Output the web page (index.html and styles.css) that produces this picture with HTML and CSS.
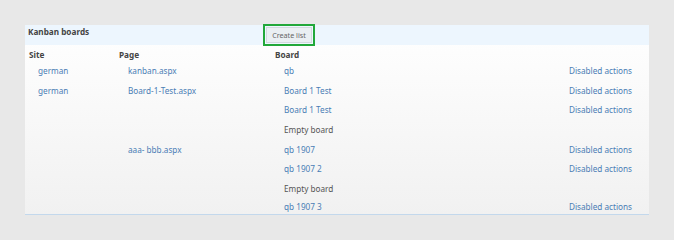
FILE: index.html
```
<!DOCTYPE html>
<html lang="en">
<head>
    <meta charset="UTF-8">
    <title>Kanban boards</title>
    <link rel="stylesheet" href="styles.css">
</head>
<body>
    <div class="panel">
        <div class="panel-head">
            <div class="title">Kanban boards</div>
            <div class="focus-ring"><button class="btn">Create list</button></div>
        </div>
        <div class="row cols">
            <div class="site">Site</div>
            <div class="page">Page</div>
            <div class="board">Board</div>
            <div></div>
        </div>
        <div class="rows">
            <div class="row">
                <div class="site link">german</div>
                <div class="page link">kanban.aspx</div>
                <div class="board link">qb</div>
                <div class="act link">Disabled actions</div>
            </div>
            <div class="row">
                <div class="site link">german</div>
                <div class="page link">Board-1-Test.aspx</div>
                <div class="board link">Board 1 Test</div>
                <div class="act link">Disabled actions</div>
            </div>
            <div class="row">
                <div class="site"></div>
                <div class="page"></div>
                <div class="board link">Board 1 Test</div>
                <div class="act link">Disabled actions</div>
            </div>
            <div class="row">
                <div class="site"></div>
                <div class="page"></div>
                <div class="board">Empty board</div>
                <div class="act"></div>
            </div>
            <div class="row">
                <div class="site"></div>
                <div class="page link">aaa- bbb.aspx</div>
                <div class="board link">qb 1907</div>
                <div class="act link">Disabled actions</div>
            </div>
            <div class="row">
                <div class="site"></div>
                <div class="page"></div>
                <div class="board link">qb 1907 2</div>
                <div class="act link">Disabled actions</div>
            </div>
            <div class="row">
                <div class="site"></div>
                <div class="page"></div>
                <div class="board">Empty board</div>
                <div class="act"></div>
            </div>
            <div class="row last">
                <div class="site"></div>
                <div class="page"></div>
                <div class="board link">qb 1907 3</div>
                <div class="act link">Disabled actions</div>
            </div>
        </div>
    </div>
</body>
</html>
```

FILE: styles.css
```
body {
    margin: 0;
    background-color: #e8e8e8;
    font-family: "Noto Sans", "Open Sans", sans-serif;
    font-size: 8.2px;
    color: #555;
}
.panel {
    margin: 25px 25px 0 25px;
    background: linear-gradient(#ffffff, #f1f1f1);
}
.panel-head {
    display: grid;
    grid-template-columns: 246px 1fr;
    align-items: start;
    height: 20px;
    background-color: #edf6fe;
}
.title {
    padding: 1px 0 0 3px;
    font-weight: bold;
    color: #444;
}
.focus-ring {
    margin: -1px 0 0 -8px;
    width: 52px;
    height: 22px;
    border: 2px solid #22a83a;
    padding: 1px;
    box-sizing: border-box;
}
.btn {
    display: block;
    width: 100%;
    height: 100%;
    padding: 0;
    border: 1px solid #d3d9de;
    background-color: #eaeff3;
    color: #666;
    font-family: inherit;
    font-size: 7.2px;
}
.row {
    display: grid;
    grid-template-columns: 90px 156px 1fr auto;
    height: 19.6px;
    align-items: center;
}
.row.cols {
    height: 16px;
    padding-top: 3px;
    box-sizing: border-box;
    font-weight: bold;
    color: #444;
}
.cols .site { padding-left: 4px; }
.cols .page { padding-left: 4px; }
.cols .board { padding-left: 4px; }
.site, .page, .board {
    padding-left: 13px;
}
.act {
    padding-right: 17px;
}
.link {
    color: #4a7db5;
}
.rows {
    border-bottom: 1px solid #c3d8ec;
}
.row.last {
    height: 16px;
    align-items: start;
    padding-top: 3px;
    box-sizing: border-box;
}
```
